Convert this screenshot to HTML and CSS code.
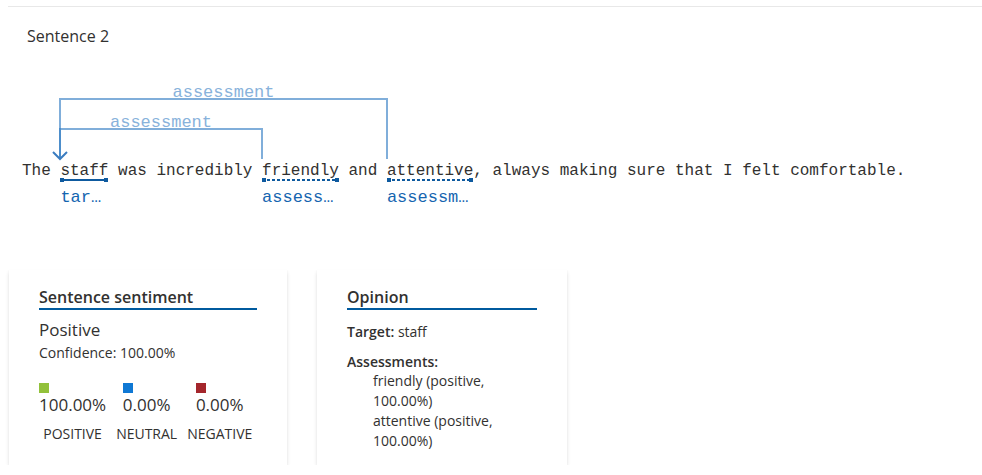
FILE: index.html
```html
<!DOCTYPE html>
<html>
<head>
<meta charset="utf-8">
<link rel="stylesheet" href="styles.css">
</head>
<body>
<div class="page">
  <div class="rule"></div>
  <div class="title">Sentence 2</div>
  <div class="viz">
    <svg class="arcs" width="960" height="90" viewBox="0 0 960 90">
      <path class="arc" d="M52 79 V19 H379 V79"/>
      <path class="arc" d="M52 79 V49 H254 V79"/>
      <polyline class="arrow" points="45,72 52,79 59,72"/>
      <text class="arc-label" x="215.5" y="17" text-anchor="middle">assessment</text>
      <text class="arc-label" x="153" y="47" text-anchor="middle">assessment</text>
    </svg>
    <div class="sentence">The <span class="tok">staff<span class="ul solid"></span><span class="lbl">tar…</span></span> was incredibly <span class="tok">friendly<span class="ul dashed"></span><span class="lbl">assess…</span></span> and <span class="tok">attentive<span class="ul dashed"></span><span class="lbl">assessm…</span></span>, always making sure that I felt comfortable.</div>
  </div>
  <div class="cards">
    <div class="card card-sent">
      <div class="card-h">Sentence sentiment</div>
      <div class="sent-label">Positive</div>
      <div class="conf">Confidence: 100.00%</div>
      <div class="scores">
        <div class="score">
          <div class="score-top"><span class="sw pos"></span><span class="pct">100.00%</span></div>
          <div class="score-name">POSITIVE</div>
        </div>
        <div class="score">
          <div class="score-top"><span class="sw neu"></span><span class="pct">0.00%</span></div>
          <div class="score-name">NEUTRAL</div>
        </div>
        <div class="score">
          <div class="score-top"><span class="sw neg"></span><span class="pct">0.00%</span></div>
          <div class="score-name">NEGATIVE</div>
        </div>
      </div>
    </div>
    <div class="card card-op">
      <div class="card-h">Opinion</div>
      <div class="op-target"><b>Target:</b> staff</div>
      <div class="op-assess"><b>Assessments:</b></div>
      <div class="op-list">
        <div class="op-item">friendly (positive, 100.00%)</div>
        <div class="op-item">attentive (positive, 100.00%)</div>
      </div>
    </div>
  </div>
</div>
</body>
</html>
```
FILE: styles.css
```css
html, body {
  margin: 0;
  padding: 0;
  background: #ffffff;
}
body {
  font-family: "Open Sans", "Noto Sans", sans-serif;
  color: #323130;
}
.page {
  padding-left: 8px;
}
.rule {
  margin-top: 6px;
  border-top: 1px solid #e8e8e8;
}
.title {
  margin-top: 18px;
  margin-left: 19px;
  font-size: 16px;
  line-height: 22px;
}
.viz {
  position: relative;
  margin-top: 33px;
  padding-top: 81px;
  padding-left: 14px;
}
.arcs {
  position: absolute;
  left: 0;
  top: 0;
  overflow: visible;
}
.arc {
  fill: none;
  stroke: #2b78c2;
  stroke-opacity: 0.6;
  stroke-width: 2;
}
.arrow {
  fill: none;
  stroke: #3a7cc0;
  stroke-width: 2;
}
.arc-label {
  font-family: "Liberation Mono", monospace;
  font-size: 17px;
  fill: #88b2db;
}
.sentence {
  font-family: "Liberation Mono", monospace;
  font-size: 16px;
  line-height: 20px;
  color: #323130;
  white-space: pre;
}
.tok {
  display: inline-block;
  position: relative;
}
.ul {
  position: absolute;
  left: 0;
  right: 0;
  top: 18px;
  height: 2px;
}
.ul.solid {
  background: #0e5a9f;
}
.ul.dashed {
  background: repeating-linear-gradient(to right, #0e5a9f 0 3px, transparent 3px 5px);
}
.ul::before, .ul::after {
  content: "";
  position: absolute;
  top: -1px;
  width: 4px;
  height: 4px;
  background: #0e5a9f;
}
.ul::before { left: 0; }
.ul::after { right: 0; }
.lbl {
  position: absolute;
  left: 0;
  top: 27px;
  font-size: 17px;
  line-height: 20px;
  color: #1565b0;
}
.cards {
  display: flex;
  gap: 30px;
  margin-top: 89px;
  margin-left: 1px;
}
.card {
  box-sizing: border-box;
  height: 195px;
  padding: 17px 30px 0;
  background: #fff;
  box-shadow: 0 1.6px 3.6px 0 rgba(0,0,0,0.132), 0 0.3px 0.9px 0 rgba(0,0,0,0.108);
}
.card-sent { width: 278px; }
.card-op { width: 250px; }
.card-h {
  font-size: 16px;
  font-weight: 600;
  line-height: 21px;
  border-bottom: 2px solid #005a9e;
}
.sent-label {
  margin-top: 9px;
  font-size: 17px;
  line-height: 22px;
}
.conf {
  margin-top: 3px;
  font-size: 14px;
  line-height: 18px;
}
.scores {
  display: flex;
  gap: 10px;
  margin-top: 21px;
}
.score {
  display: flex;
  flex-direction: column;
  align-items: center;
}
.score-top {
  display: flex;
  flex-direction: column;
  align-items: flex-start;
}
.sw {
  width: 10px;
  height: 10px;
  margin-bottom: 1px;
}
.sw.pos { background: #92c13b; }
.sw.neu { background: #0f78d4; }
.sw.neg { background: #a4262c; }
.pct {
  font-size: 17px;
  line-height: 22px;
}
.score-name {
  margin-top: 9px;
  font-size: 14px;
  line-height: 18px;
}
.op-target {
  margin-top: 13px;
  font-size: 14px;
  line-height: 18px;
}
.op-assess {
  margin-top: 12px;
  font-size: 14px;
  line-height: 18px;
}
.op-target b, .op-assess b {
  font-weight: 600;
}
.op-list {
  padding-left: 26px;
}
.op-item {
  font-size: 14px;
  line-height: 20px;
}
```
